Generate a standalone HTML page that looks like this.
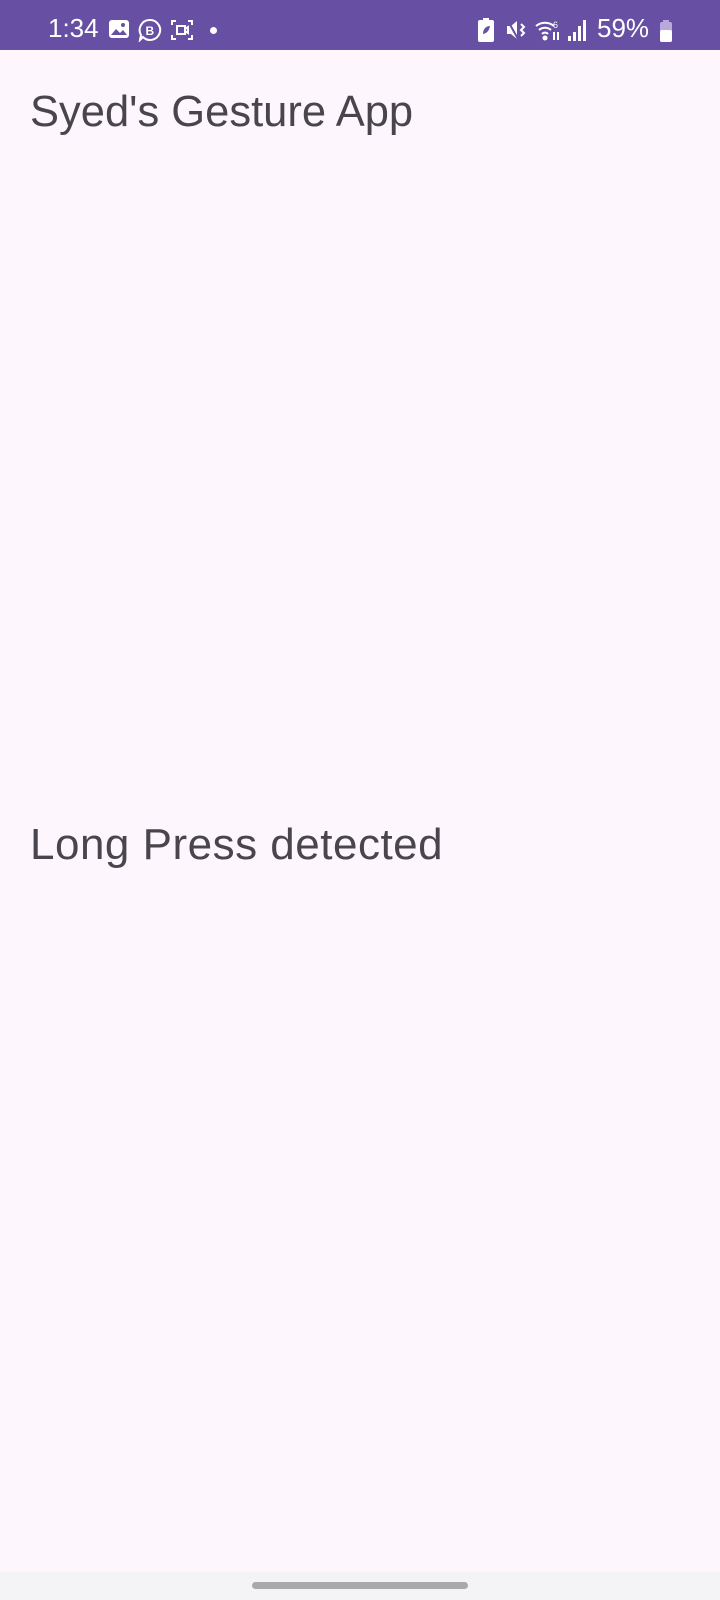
<!DOCTYPE html>
<html><head><meta charset="utf-8"><style>
html,body{margin:0;padding:0}
body{width:720px;height:1600px;background:#fdf7fd;position:relative;overflow:hidden;font-family:"Liberation Sans",sans-serif}
.sb{position:absolute;left:0;top:0;width:720px;height:50px;background:#6750a4;color:#fff}
.t{position:absolute;font-size:44px;color:#49454f;left:30px;white-space:nowrap}
.nav{position:absolute;left:0;top:1572px;width:720px;height:28px;background:#f4f4f6}
.pill{position:absolute;left:252px;top:1582px;width:216px;height:7px;border-radius:4px;background:#a9a9ab}
</style></head><body>
<div class="sb">
<div style="position:absolute;left:48px;top:13px;font-size:26px;">1:34</div>
<svg style="position:absolute;left:108px;top:19px" width="22" height="20" viewBox="0 0 22 20"><rect x="1" y="1" width="20" height="18" rx="3" fill="#fff"/><path d="M3 16 L8 10 L12 14 L15 11 L19 16Z" fill="#6750a4"/><circle cx="15" cy="6" r="2" fill="#6750a4"/></svg>
<svg style="position:absolute;left:138px;top:18px" width="24" height="24" viewBox="0 0 24 24"><path d="M12 2a10 10 0 1 1-7 17l-3 3 1-5A10 10 0 0 1 12 2z" fill="none" stroke="#fff" stroke-width="2"/><text x="7.5" y="17" font-size="12" font-weight="bold" fill="#fff" font-family="Liberation Sans">B</text></svg>
<svg style="position:absolute;left:171px;top:20px" width="22" height="20" viewBox="0 0 22 20" fill="none" stroke="#fff" stroke-width="2"><path d="M1 5V1h4M17 1h4v4M21 15v4h-4M5 19H1v-4"/><rect x="6" y="6" width="8" height="8"/><path d="M14 9l3-2v6l-3-2"/></svg>
<div style="position:absolute;left:210px;top:27px;width:7px;height:7px;border-radius:50%;background:#fff"></div>
<svg style="position:absolute;left:478px;top:18px" width="16" height="24" viewBox="0 0 16 24"><rect x="5" y="0" width="6" height="3" fill="#fff"/><rect x="0" y="2" width="16" height="22" rx="2" fill="#fff"/><path d="M5 16c0-5 3-8 7-8-1 5-3 7-7 8z" fill="#6750a4"/></svg>
<svg style="position:absolute;left:505px;top:18px" width="24" height="24" viewBox="0 0 24 24" fill="#fff"><path d="M2 8h4l6-5v18l-6-5H2z"/><path d="M3 3l10 18" stroke="#6750a4" stroke-width="2"/><path d="M16 6l3 3-3 3 3 3-3 3" stroke="#fff" stroke-width="2" fill="none"/></svg>
<svg style="position:absolute;left:535px;top:18px" width="26" height="24" viewBox="0 0 26 24" fill="none" stroke="#fff" stroke-width="2"><path d="M1 8a14 14 0 0 1 18 0M4 12a9 9 0 0 1 12 0M7 16a4 4 0 0 1 6 0"/><circle cx="10" cy="20" r="1.5" fill="#fff"/><text x="18" y="10" font-size="9" fill="#fff" stroke="none">6</text><path d="M19 14v8M23 22v-8"/></svg>
<svg style="position:absolute;left:568px;top:20px" width="20" height="22" viewBox="0 0 20 22" fill="#fff"><rect x="0" y="16" width="3" height="5"/><rect x="5" y="12" width="3" height="9"/><rect x="10" y="6" width="3" height="15"/><rect x="15" y="0" width="3" height="21"/></svg>
<div style="position:absolute;left:597px;top:13px;font-size:26px;">59%</div>
<svg style="position:absolute;left:660px;top:20px" width="12" height="22" viewBox="0 0 12 22"><rect x="3" y="0" width="6" height="2" fill="#b9a8dc"/><rect x="0" y="2" width="12" height="20" rx="2" fill="#b9a8dc"/><rect x="0" y="10" width="12" height="12" rx="2" fill="#fff"/></svg>
</div>
<div class="t" style="top:88px;font-size:43.5px">Syed's Gesture App</div>
<div class="t" style="top:820px;letter-spacing:0.5px">Long Press detected</div>
<div class="nav"></div><div class="pill"></div>
</body></html>
